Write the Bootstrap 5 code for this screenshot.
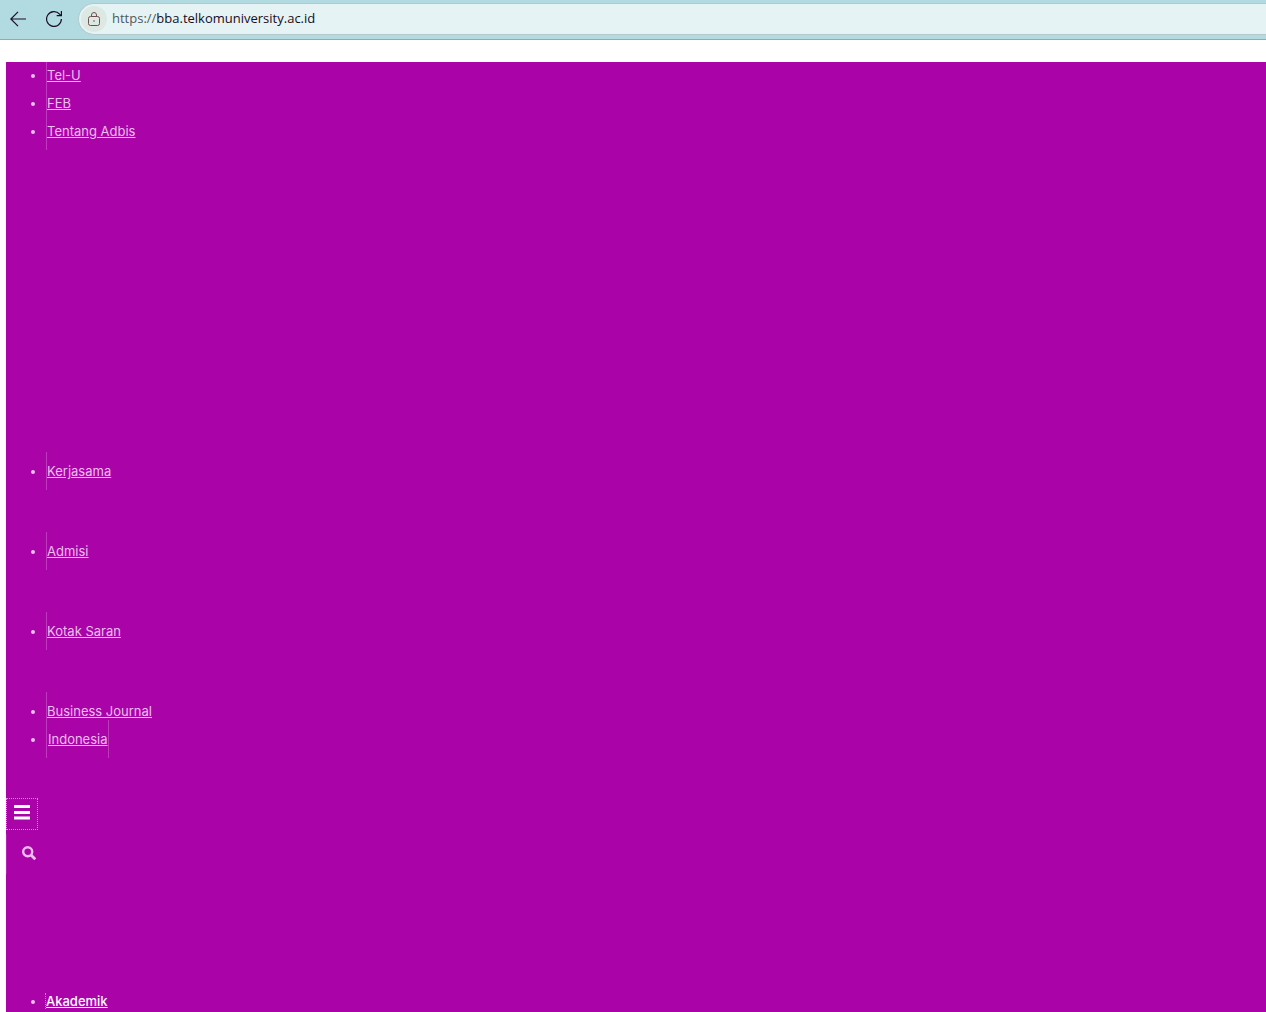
<!DOCTYPE html>
<html lang="id">
<head>
<meta charset="utf-8">
<meta name="viewport" content="width=device-width, initial-scale=1">
<title>Administrasi Bisnis – Telkom University</title>
<link href="https://cdn.jsdelivr.net/npm/bootstrap@5.3.0/dist/css/bootstrap.min.css" rel="stylesheet">
<style>
  body { font-family: Inter, "Liberation Sans", sans-serif; font-size: 13px; background: #fff; }
  .browser-bar { height: 40px; background: #b1dae1; border-bottom: 1px solid #85b0b5; padding: 3px 0 4px 10px; }
  .tool-btn { width: 16px; height: 32px; color: #1c0c22; }
  .tool-btn + .tool-btn { margin-left: 20px; }
  .address { height: 32px; margin-left: 16px; background: #e5f3f4; border: 1px solid #b5c9cc; border-right: 0;
    border-radius: 16px 0 0 16px; font-family: "Open Sans", "Noto Sans", sans-serif; font-size: 13px; }
  .site-info { width: 26px; height: 26px; margin: 0 5px 0 2px; background: #dde8e3; color: #6f4f4b; }
  .address label { color: #50585c; }
  .address input { color: #170c22; font: inherit; outline: 0; min-width: 0; }
  .site-header { margin: 22px 0 0 6px; background: #aa04a9; color: #eac0ea; }
  .menu-list { padding-left: 40px; line-height: 26px; }
  .menu-list li { padding-bottom: 2px; }
  .menu-list li::marker { font-family: "Liberation Sans", sans-serif; font-size: 13px; }
  .menu-list a { color: #eebfee; border-left: 1px solid #c038be; padding: 11px 0; }
  .menu-list .lang-link { border-right: 1px solid #c038be; padding-left: 1px; }
  .gap-wide { margin-bottom: 312px; }
  .gap-item { margin-bottom: 52px; }
  .menu-toggle { width: 32px; height: 32px; margin-top: 44px; border: 1px dotted #dd88dc; color: #fff; }
  .search-toggle { height: 40px; margin-top: 4px; padding: 0 15px 2px; border-left: 1px solid #b920b7; color: #eebfee; }
  .main-list { margin-top: 116px; line-height: 22px; }
  .main-list li { padding-bottom: 0; }
  .main-list a { color: #fff; border-left: 1px dotted #d56cd3; font-weight: 500; padding: 0; margin-left: -1px; }
</style>
</head>
<body class="min-vh-100 d-flex flex-column overflow-hidden">
<div class="browser-bar d-flex align-items-center flex-shrink-0">
  <button class="tool-btn btn p-0 border-0 d-flex align-items-center" aria-label="Kembali">
    <svg width="16" height="16" viewBox="0 0 16 16" fill="none" stroke="currentColor" stroke-width="1.2"><path d="M16 8H.8M8 .8.8 8 8 15.2"/></svg>
  </button>
  <button class="tool-btn btn p-0 border-0 d-flex align-items-center" aria-label="Muat ulang">
    <svg width="16" height="16" viewBox="0 0 16 16" fill="none" stroke="currentColor" stroke-width="1.2"><path d="M15.4 8A7.4 7.4 0 1 1 13.6 3.2L15 4.6M15.4 0V4.7H10.7"/></svg>
  </button>
  <form class="address d-flex align-items-center flex-grow-1" onsubmit="return false">
    <button type="button" class="site-info btn rounded-circle border-0 p-0 d-flex align-items-center justify-content-center" aria-label="Info situs">
      <svg width="12" height="14" viewBox="0 0 12 14" fill="none" stroke="currentColor" stroke-width="1"><rect x=".5" y="4.5" width="11" height="9" rx="2"/><path d="M3.5 4.5V3a2.5 2.5 0 0 1 5 0v1.5"/><circle cx="6" cy="9" r=".8" fill="currentColor" stroke="none"/></svg>
    </button>
    <label for="url">https://</label>
    <input id="url" type="text" class="border-0 bg-transparent p-0 flex-grow-1" value="bba.telkomuniversity.ac.id">
  </form>
</div>
<header class="site-header flex-grow-1 overflow-hidden">
  <nav aria-label="Menu atas">
    <ul class="menu-list mb-0">
      <li><a href="#">Tel-U</a></li>
      <li><a href="#">FEB</a></li>
      <li class="gap-wide"><a href="#">Tentang Adbis</a></li>
      <li class="gap-item"><a href="#">Kerjasama</a></li>
      <li class="gap-item"><a href="#">Admisi</a></li>
      <li class="gap-item"><a href="#">Kotak Saran</a></li>
      <li><a href="#">Business Journal</a></li>
      <li><a class="lang-link" href="#">Indonesia</a></li>
    </ul>
  </nav>
  <button class="menu-toggle btn rounded-0 px-0 pt-0 pb-1 d-flex justify-content-center align-items-center" aria-label="Menu">
    <svg width="16" height="15" viewBox="0 0 16 15" fill="currentColor"><path d="M0 0h16v3H0zM0 6h16v3H0zM0 11.5h16v3H0z"/></svg>
  </button>
  <button class="search-toggle btn rounded-0 border-top-0 border-end-0 border-bottom-0 d-flex align-items-center" aria-label="Cari">
    <svg width="14" height="14" viewBox="0 0 14 14" fill="none" stroke="currentColor" stroke-width="2.4"><circle cx="5.7" cy="5.7" r="4.5"/><path d="m9 9 4.3 4.3" stroke-width="2.8"/></svg>
  </button>
  <nav aria-label="Menu utama">
    <ul class="menu-list main-list mb-0">
      <li><a href="#">Akademik</a></li>
    </ul>
  </nav>
</header>
<script src="https://cdn.jsdelivr.net/npm/bootstrap@5.3.0/dist/js/bootstrap.bundle.min.js"></script>
</body>
</html>
